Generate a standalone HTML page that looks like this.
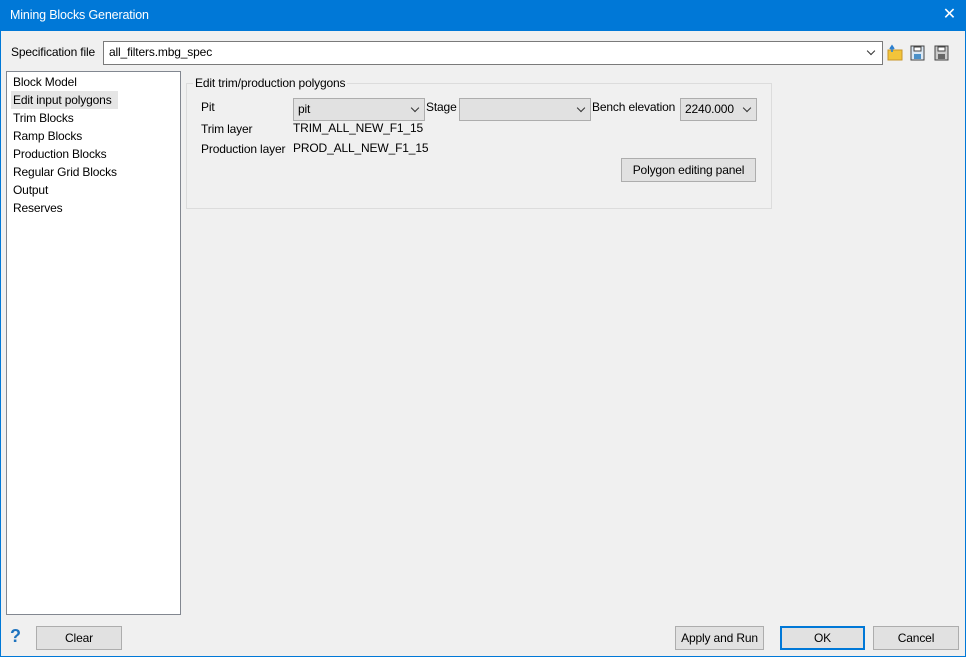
<!DOCTYPE html>
<html><head><style>
*{box-sizing:border-box;margin:0;padding:0}
body{width:966px;height:657px;background:#f0f0f0;font-family:"Liberation Sans",sans-serif;font-size:12px;letter-spacing:-0.15px;color:#000;position:relative;overflow:hidden}
.win{position:absolute;left:0;top:0;width:966px;height:657px;border:1px solid #0078d7}
.title{position:absolute;left:0;top:0;width:966px;height:31px;background:#0078d7;color:#fff;font-size:12.5px;line-height:31px;padding-left:10px}
.x{position:absolute;right:10px;top:0;color:#fff;font-size:16px;line-height:30px;font-weight:normal}
.a{position:absolute;white-space:nowrap}
.box{position:absolute;background:#fff;border:1px solid #7a7a7a}
.combo{position:absolute;background:#e1e1e1;border:1px solid #adadad;padding-left:4px;line-height:21px}
.chev{position:absolute;right:6px;top:6px;width:6px;height:6px;border-right:1px solid #333;border-bottom:1px solid #333;transform:rotate(45deg)}
.btn{position:absolute;background:#e1e1e1;border:1px solid #adadad;text-align:center;line-height:22px}
</style></head><body>
<div class="win"></div>
<div class="title">Mining Blocks Generation<span class="x">✕</span></div>
<div class="a" style="left:11px;top:45px">Specification file</div>
<div class="box" style="left:103px;top:41px;width:780px;height:24px;padding-left:5px;line-height:21px">all_filters.mbg_spec<span class="chev" style="right:8px;top:6px"></span></div>
<svg class="a" style="left:887px;top:44px" width="66" height="18">
<rect x="1" y="6" width="14" height="10" fill="#f2c43a" stroke="#c9962a"/><path d="M5 8V3M3 5l2-3 2 3" stroke="#2a7fd0" stroke-width="1.6" fill="none"/>
<rect x="24" y="2" width="13" height="14" fill="#dbe8f4" stroke="#444"/><rect x="27" y="3" width="7" height="4" fill="#fff" stroke="#444"/><rect x="27" y="10" width="7" height="5" fill="#4a90c8"/>
<rect x="48" y="2" width="13" height="14" fill="#ccc" stroke="#444"/><rect x="51" y="3" width="7" height="4" fill="#fff" stroke="#444"/><rect x="51" y="10" width="7" height="5" fill="#666"/>
</svg>
<div class="box" style="left:6px;top:71px;width:175px;height:544px;border-color:#828790"></div>
<div class="a" style="left:11px;top:91px;width:107px;height:18px;background:#e5e5e5"></div>
<div class="a" style="left:13px;top:73px;line-height:18px">Block Model<br>Edit input polygons<br>Trim Blocks<br>Ramp Blocks<br>Production Blocks<br>Regular Grid Blocks<br>Output<br>Reserves</div>
<div class="a" style="left:186px;top:83px;width:586px;height:126px;border:1px solid #dcdcdc"></div>
<div class="a" style="left:193px;top:76px;background:#f0f0f0;padding:0 2px">Edit trim/production polygons</div>
<div class="a" style="left:201px;top:100px">Pit</div>
<div class="combo" style="left:293px;top:98px;width:132px;height:23px">pit<span class="chev"></span></div>
<div class="a" style="left:426px;top:100px">Stage</div>
<div class="combo" style="left:459px;top:98px;width:132px;height:23px"><span class="chev"></span></div>
<div class="a" style="left:592px;top:100px">Bench elevation</div>
<div class="combo" style="left:680px;top:98px;width:77px;height:23px">2240.000<span class="chev"></span></div>
<div class="a" style="left:201px;top:122px">Trim layer</div>
<div class="a" style="left:293px;top:121px">TRIM_ALL_NEW_F1_15</div>
<div class="a" style="left:201px;top:142px">Production layer</div>
<div class="a" style="left:293px;top:141px">PROD_ALL_NEW_F1_15</div>
<div class="btn" style="left:621px;top:158px;width:135px;height:24px">Polygon editing panel</div>
<div class="a" style="left:10px;top:626px;color:#1e73be;font-weight:bold;font-size:18px">?</div>
<div class="btn" style="left:36px;top:626px;width:86px;height:24px">Clear</div>
<div class="btn" style="left:675px;top:626px;width:89px;height:24px">Apply and Run</div>
<div class="btn" style="left:780px;top:626px;width:85px;height:24px;border:2px solid #0078d7;line-height:20px">OK</div>
<div class="btn" style="left:873px;top:626px;width:86px;height:24px">Cancel</div>
</body></html>
